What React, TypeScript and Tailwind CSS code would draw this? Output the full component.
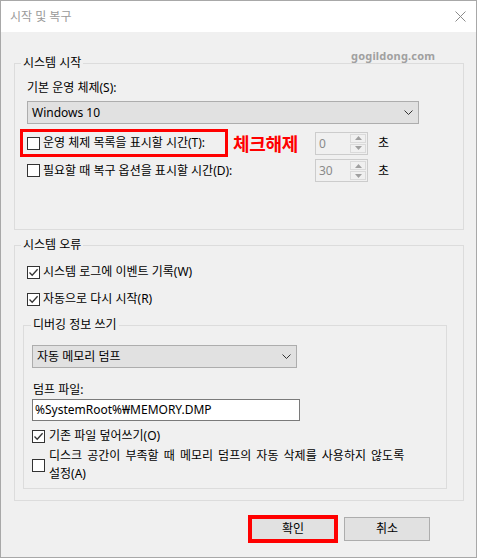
import React from 'react';

const Check: React.FC<{ checked?: boolean }> = ({ checked }) => (
  <span className="w-[13px] h-[13px] border border-[#333333] bg-white flex items-center justify-center shrink-0">
    {checked && (
      <svg width="11" height="11" viewBox="0 0 11 11">
        <path d="M1.5 5.5 L4.2 8.3 L9.6 2.3" fill="none" stroke="#333333" strokeWidth="1.3" />
      </svg>
    )}
  </span>
);

const Chevron = () => (
  <svg width="9" height="6" viewBox="0 0 9 6">
    <path d="M0.5 0.5 L4.5 4.5 L8.5 0.5" fill="none" stroke="#333333" strokeWidth="1" />
  </svg>
);

const Combo: React.FC<{ width: string; text: string }> = ({ width, text }) => (
  <div className={`h-[23px] border border-[#adadad] bg-[#e1e1e1] flex items-center justify-between pl-[4px] pr-[5px] ${width}`}>
    <span>{text}</span>
    <Chevron />
  </div>
);

const Spinner: React.FC<{ value: string }> = ({ value }) => (
  <div className="w-[53px] h-[23px] border border-[#cccccc] flex shrink-0">
    <div className="flex-1 pl-[3px] leading-[21px] text-[#8a8a8a]">{value}</div>
    <div className="w-[17px] flex flex-col gap-[1px] py-[1px] pr-[1px]">
      <div className="flex-1 border border-[#dadada] flex items-center justify-center">
        <svg width="7" height="4" viewBox="0 0 7 4">
          <path d="M0 4 L3.5 0 L7 4 Z" fill="#a0a0a0" />
        </svg>
      </div>
      <div className="flex-1 border border-[#dadada] flex items-center justify-center">
        <svg width="7" height="4" viewBox="0 0 7 4">
          <path d="M0 0 L3.5 4 L7 0 Z" fill="#a0a0a0" />
        </svg>
      </div>
    </div>
  </div>
);

export default function App() {
  return (
    <div className="w-[478px] h-[559px] bg-white text-[12px] text-black font-['Noto_Sans','Noto_Sans_CJK_KR',sans-serif]">
      <div className="relative w-[477px] h-[558px] border border-[#a8a8a8] bg-[#f0f0f0] flex flex-col">
        {/* title bar */}
        <div className="h-[31px] bg-white flex items-center justify-between pl-[9px] pr-[10px] shrink-0">
          <span className="text-[#9a9a9a] leading-[16px]">시작 및 복구</span>
          <svg width="11" height="11" viewBox="0 0 11 11">
            <path d="M0.5 0.5 L10.5 10.5 M10.5 0.5 L0.5 10.5" stroke="#8a8a8a" strokeWidth="1" />
          </svg>
        </div>

        {/* watermark */}
        <span className="absolute left-[350px] top-[47px] text-[11px] font-bold text-[#a0a0a0] leading-[16px] tracking-[0.2px]">
          gogildong.com
        </span>

        <div className="flex-1 px-[13px]">
          {/* 시스템 시작 */}
          <fieldset className="mt-[23px] w-[450px] border border-[#dcdcdc]">
            <legend className="ml-[6px] px-[2px] leading-[16px]">시스템 시작</legend>
            <div className="pl-[12px] pb-[47px]">
              <div className="mt-[9px] leading-[16px]">기본 운영 체제(S):</div>
              <div className="mt-[5px]">
                <Combo width="w-[392px]" text="Windows 10" />
              </div>
              <div className="mt-[5px] h-[28px] flex items-center">
                <div className="-ml-[7px] w-[288px] flex items-center">
                  <div className="w-[208px] h-[28px] border-[3px] border-[#ff0000] flex items-center gap-[3px] pl-[4px]">
                    <Check />
                    <span className="leading-[16px]">운영 체제 목록을 표시할 시간(T):</span>
                  </div>
                  <span className="ml-[5px] text-[18px] font-bold text-[#ff0000] leading-[20px] tracking-[-0.3px] font-['Noto_Sans_CJK_KR',sans-serif]">
                    체크해제
                  </span>
                </div>
                <div className="ml-[7px]">
                  <Spinner value="0" />
                </div>
                <span className="ml-[10px] leading-[16px]">초</span>
              </div>
              <div className="mt-[2px] h-[23px] flex items-center">
                <div className="w-[288px] flex items-center gap-[3px]">
                  <Check />
                  <span className="leading-[16px]">필요할 때 복구 옵션을 표시할 시간(D):</span>
                </div>
                <Spinner value="30" />
                <span className="ml-[10px] leading-[16px]">초</span>
              </div>
            </div>
          </fieldset>

          {/* 시스템 오류 */}
          <fieldset className="mt-[7px] w-[450px] border border-[#dcdcdc]">
            <legend className="ml-[6px] px-[2px] leading-[16px]">시스템 오류</legend>
            <div className="pl-[12px] pb-[11px]">
              <div className="mt-[11px] h-[16px] flex items-center gap-[3px]">
                <Check checked />
                <span className="leading-[16px]">시스템 로그에 이벤트 기록(W)</span>
              </div>
              <div className="mt-[11px] h-[16px] flex items-center gap-[3px]">
                <Check checked />
                <span className="leading-[16px]">자동으로 다시 시작(R)</span>
              </div>

              {/* 디버깅 정보 쓰기 */}
              <fieldset className="mt-[10px] -ml-[4px] w-[424px] border border-[#dcdcdc]">
                <legend className="ml-[7px] px-[2px] leading-[16px]">디버깅 정보 쓰기</legend>
                <div className="pl-[8px] pb-[5px]">
                  <div className="mt-[12px]">
                    <Combo width="w-[265px]" text="자동 메모리 덤프" />
                  </div>
                  <div className="mt-[14px] leading-[16px] pl-[1px]">덤프 파일:</div>
                  <div className="mt-[1px] w-[268px] h-[22px] border border-[#7a7a7a] bg-white pl-[2px] leading-[20px]">
                    %SystemRoot%₩MEMORY.DMP
                  </div>
                  <div className="mt-[7px] h-[16px] flex items-center gap-[4px]">
                    <Check checked />
                    <span className="leading-[16px]">기존 파일 덮어쓰기(O)</span>
                  </div>
                  <div className="mt-[3px] flex items-center gap-[4px]">
                    <Check />
                    <span className="w-[375px] leading-[18px] break-keep [word-spacing:2px]">
                      디스크 공간이 부족할 때 메모리 덤프의 자동 삭제를 사용하지 않도록
                      <br />
                      설정(A)
                    </span>
                  </div>
                </div>
              </fieldset>
            </div>
          </fieldset>

          {/* buttons */}
          <div className="mt-[14px] pr-[33px] flex items-center justify-end gap-[6px]">
            <div className="w-[90px] h-[28px] border-4 border-[#ff0000] bg-[#e1e1e1] flex items-center justify-center">
              확인
            </div>
            <div className="w-[86px] h-[24px] border border-[#adadad] bg-[#e1e1e1] flex items-center justify-center">
              취소
            </div>
          </div>
        </div>
      </div>
    </div>
  );
}
